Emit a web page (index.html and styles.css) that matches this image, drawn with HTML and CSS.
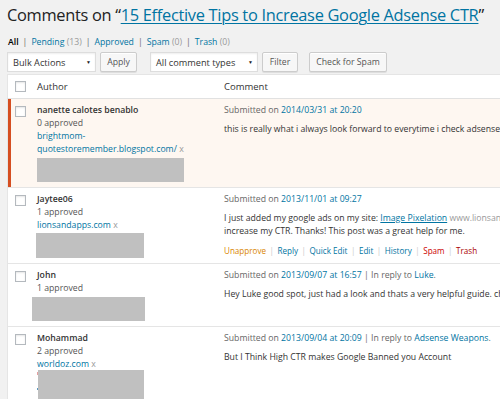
FILE: index.html
```html
<!DOCTYPE html>
<html>
<head>
<meta charset="utf-8">
<link rel="stylesheet" href="styles.css">
</head>
<body>
<div class="wrap">
  <h1 class="title">Comments on “<a href="#">15 Effective Tips to Increase Google Adsense CTR</a>”</h1>
  <ul class="subsubsub">
    <li><a class="current" href="#">All</a><span class="sep">|</span></li>
    <li><a href="#">Pending</a> <span class="count">(13)</span><span class="sep">|</span></li>
    <li><a href="#">Approved</a><span class="sep">|</span></li>
    <li><a href="#">Spam</a> <span class="count">(0)</span><span class="sep">|</span></li>
    <li><a href="#">Trash</a> <span class="count">(0)</span></li>
  </ul>
  <div class="tablenav">
    <div class="select bulk"><span>Bulk Actions</span><span class="arrow">▼</span></div>
    <button class="btn apply">Apply</button>
    <div class="select types"><span>All comment types</span><span class="arrow">▼</span></div>
    <button class="btn filter">Filter</button>
    <button class="btn spam">Check for Spam</button>
  </div>
  <table class="comments">
    <thead>
      <tr>
        <th class="check"><span class="cb"></span></th>
        <th class="author">Author</th>
        <th class="comment">Comment</th>
      </tr>
    </thead>
    <tbody>
      <tr class="unapproved">
        <td class="check"><span class="cb"></span></td>
        <td class="author">
          <div class="name">nanette calotes benablo</div>
          <div class="approved">0 approved</div>
          <div><a href="#">brightmom-<br>quotestoremember.blogspot.com/</a> <span class="x">x</span></div>
          <div class="redact r1"></div>
        </td>
        <td class="comment">
          <div class="submitted">Submitted on <a href="#">2014/03/31 at 20:20</a></div>
          <p>this is really what i always look forward to everytime i check adsense</p>
        </td>
      </tr>
      <tr>
        <td class="check"><span class="cb"></span></td>
        <td class="author">
          <div class="name">Jaytee06</div>
          <div class="approved">1 approved</div>
          <div><a href="#">lionsandapps.com</a> <span class="x">x</span></div>
          <div class="redact r2"></div>
        </td>
        <td class="comment">
          <div class="submitted">Submitted on <a href="#">2013/11/01 at 09:27</a></div>
          <p>I just added my google ads on my site: <a class="ul" href="#">Image Pixelation</a> <span class="plain">www.lionsandapps.com</span> to<br>increase my CTR. Thanks! This post was a great help for me.</p>
          <div class="row-actions">
            <a class="unapprove" href="#">Unapprove</a><span class="sep">|</span><a href="#">Reply</a><span class="sep">|</span><a href="#">Quick Edit</a><span class="sep">|</span><a href="#">Edit</a><span class="sep">|</span><a href="#">History</a><span class="sep">|</span><a class="spamlink" href="#">Spam</a><span class="sep">|</span><a class="trash" href="#">Trash</a>
          </div>
        </td>
      </tr>
      <tr>
        <td class="check"><span class="cb"></span></td>
        <td class="author">
          <div class="name">John</div>
          <div class="approved">1 approved</div>
          <div class="redact r3"></div>
        </td>
        <td class="comment">
          <div class="submitted">Submitted on <a href="#">2013/09/07 at 16:57</a> <span class="bar">|</span> In reply to <a href="#">Luke</a>.</div>
          <p>Hey Luke good spot, just had a look and thats a very helpful guide. cheers</p>
        </td>
      </tr>
      <tr>
        <td class="check"><span class="cb"></span></td>
        <td class="author">
          <div class="name">Mohammad</div>
          <div class="approved">2 approved</div>
          <div><a href="#">worldoz.com</a> <span class="x">x</span></div>
          <div class="hidden-lines">
            <div class="frags"><span class="frag red"></span><span class="frag blue"></span></div>
            <div class="redact r4"></div>
          </div>
        </td>
        <td class="comment">
          <div class="submitted">Submitted on <a href="#">2013/09/04 at 20:09</a> <span class="bar">|</span> In reply to <a href="#">Adsense Weapons</a>.</div>
          <p>But I Think High CTR makes Google Banned you Account</p>
        </td>
      </tr>
    </tbody>
  </table>
</div>
</body>
</html>
```

FILE: styles.css
```css
html, body {
  margin: 0;
  padding: 0;
  overflow: hidden;
  background: #f1f1f1;
}
body {
  font-family: "Open Sans", "Noto Sans", sans-serif;
  font-size: 8.7px;
  color: #444;
}
a {
  color: #0074a2;
  text-decoration: none;
}
.wrap {
  padding-left: 7px;
  width: 620px;
}
.title {
  margin: 0;
  padding-top: 3px;
  font-size: 16.4px;
  letter-spacing: -0.3px;
  font-weight: 400;
  line-height: 24px;
  color: #222;
  white-space: nowrap;
}
.title a {
  text-decoration: underline;
  text-decoration-thickness: 1px;
  text-underline-offset: 2px;
}
.subsubsub {
  list-style: none;
  margin: 8px 0 0 1px;
  padding: 0;
  display: flex;
  line-height: 14px;
  color: #666;
}
.subsubsub .current {
  color: #000;
  font-weight: 600;
}
.subsubsub .count {
  color: #999;
}
.subsubsub .sep {
  color: #666;
  margin: 0 4px;
}
.tablenav {
  display: flex;
  align-items: center;
  height: 20px;
  margin-top: 3px;
}
.select {
  box-sizing: border-box;
  height: 20px;
  background: #fff;
  border: 1px solid #ddd;
  box-shadow: inset 0 1px 2px rgba(0,0,0,0.07);
  display: flex;
  align-items: center;
  justify-content: space-between;
  padding: 0 4px 0 5px;
  font-size: 9.2px;
  color: #333;
}
.select .arrow {
  font-size: 5px;
  color: #222;
}
.bulk { width: 89px; }
.types { width: 108px; margin-left: 13px; }
.btn {
  box-sizing: border-box;
  height: 20px;
  margin: 0;
  padding: 0;
  font-family: inherit;
  font-size: 8.7px;
  color: #555;
  background: #f7f7f7;
  border: 1px solid #ccc;
  border-radius: 2px;
  box-shadow: inset 0 1px 0 #fff, 0 1px 0 rgba(0,0,0,0.08);
}
.apply { margin-left: 4px; width: 37px; }
.filter { margin-left: 4px; width: 36px; }
.spam { margin-left: 11px; width: 78px; }

.comments {
  margin-top: 2px;
  width: 600px;
  border-collapse: collapse;
  background: #fff;
  border: 1px solid #e5e5e5;
  table-layout: fixed;
}
.comments th, .comments td {
  padding: 0;
  text-align: left;
  vertical-align: top;
}
.comments th {
  font-weight: 400;
  color: #333;
  height: 23px;
  vertical-align: middle;
  border-bottom: 1px solid #e1e1e1;
  font-size: 9.5px;
}
.comments th.check, .comments td.check { width: 29px; }
.comments th.author, .comments td.author { width: 187px; }
.cb {
  display: block;
  box-sizing: border-box;
  width: 11px;
  height: 11px;
  margin-left: 7px;
  border: 1px solid #b4b9be;
  background: #fff;
  box-shadow: inset 0 1px 2px rgba(0,0,0,0.1);
}
td.check .cb { margin-top: 2px; }
th .cb { margin-top: 0; }
.comments tbody tr { border-top: 1px solid #e5e5e5; }
.comments tbody tr:first-child { border-top: 0; }
.comments tbody td { padding-top: 5px; padding-bottom: 5px; line-height: 13px; }
.unapproved td { background: #fef7f1; }
.unapproved td.check { box-shadow: inset 3px 0 0 #d54e21; }
.name {
  font-weight: 600;
  color: #333;
}
.approved { color: #555; }
.x { color: #999; }
.redact { background: #c0c0c0; }
.r1 { width: 147px; height: 24px; margin-top: 2px; }
.r2 { width: 108px; height: 25px; margin-top: 1px; margin-left: -1px; }
.r3 { width: 113px; height: 24px; margin-top: 2px; margin-left: -5px; }
.hidden-lines { display: flex; margin-top: -1px; }
.frags { width: 1px; }
.frag { display: block; width: 2px; }
.frag.red { background: #e6a0a0; margin-top: 2px; height: 3px; }
.frag.blue { background: #5a9ac0; margin-top: 13px; height: 2px; }
.r4 { width: 106px; height: 30px; }

.comment { color: #333; }
.submitted { color: #666; white-space: nowrap; }
.submitted .bar { color: #666; }
.comment p {
  margin: 6px 0 0;
  white-space: nowrap;
}
.comment .ul { text-decoration: underline; }
.comment .plain { color: #999; }
.row-actions {
  margin-top: 6px;
  font-size: 8.1px;
  color: #ccc;
}
.row-actions .sep { margin: 0 3.5px; }
.row-actions .unapprove { color: #d98500; }
.row-actions .spamlink { color: #cc0000; }
.row-actions .trash { color: #a00; }
```
